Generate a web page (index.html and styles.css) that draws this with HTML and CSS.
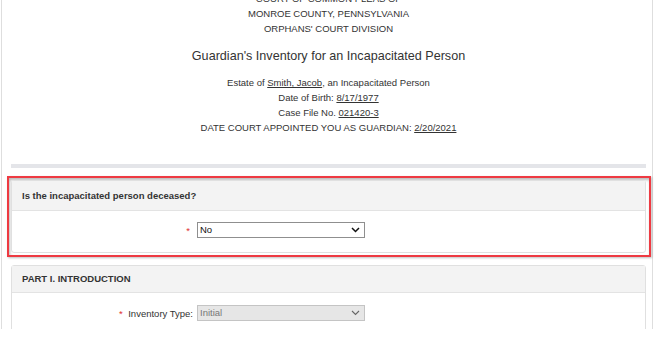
FILE: index.html
```html
<!DOCTYPE html>
<html>
<head>
<meta charset="utf-8">
<link rel="stylesheet" href="styles.css">
</head>
<body>
<div class="page">
  <div class="court">
    <div>COURT OF COMMON PLEAS OF</div>
    <div>MONROE COUNTY, PENNSYLVANIA</div>
    <div>ORPHANS' COURT DIVISION</div>
  </div>
  <h1 class="title">Guardian's Inventory for an Incapacitated Person</h1>
  <div class="estate">
    <div>Estate of <u>Smith, Jacob</u>, an Incapacitated Person</div>
    <div>Date of Birth: <u>8/17/1977</u></div>
    <div>Case File No. <u>021420-3</u></div>
    <div>DATE COURT APPOINTED YOU AS GUARDIAN: <u>2/20/2021</u></div>
  </div>
  <div class="divider"></div>

  <div class="highlight">
    <div class="panel">
      <div class="panel-head">Is the incapacitated person deceased?</div>
      <div class="panel-body">
        <div class="form-row">
          <label class="label"><span class="req">*</span></label>
          <div class="select-wrap">
            <select class="select"><option>No</option></select>
            <svg class="chev" width="9" height="6" viewBox="0 0 9 6"><path d="M1 1 L4.5 4.5 L8 1" fill="none" stroke="#111" stroke-width="1.5"/></svg>
          </div>
        </div>
      </div>
    </div>
  </div>

  <div class="panel second">
    <div class="panel-head">PART I. INTRODUCTION</div>
    <div class="panel-body">
      <div class="form-row">
        <label class="label"><span class="req">*</span> Inventory Type:</label>
        <div class="select-wrap">
          <select class="select disabled" disabled><option>Initial</option></select>
          <svg class="chev" width="9" height="6" viewBox="0 0 9 6"><path d="M1 1 L4.5 4.5 L8 1" fill="none" stroke="#666" stroke-width="1.1"/></svg>
        </div>
      </div>
    </div>
  </div>
</div>
</body>
</html>
```

FILE: styles.css
```css
html, body {
  margin: 0;
  padding: 0;
  background: #fff;
  overflow: hidden;
}
body {
  font-family: "Liberation Sans", Arial, sans-serif;
  color: #333;
  font-size: 9.5px;
}
.page {
  margin: 0 3px 0 1px;
  border-left: 1px solid #dedede;
  border-right: 1px solid #dedede;
  height: 338px;
  padding: 0 6px 0 9px;
  box-sizing: border-box;
}
.court {
  margin-top: -9px;
  text-align: center;
  line-height: 15px;
}
.title {
  margin: 11px 0 0;
  text-align: center;
  font-size: 12.6px;
  font-weight: normal;
  line-height: 18px;
  color: #333;
}
.estate {
  margin-top: 10px;
  text-align: center;
  line-height: 15px;
}
.estate u {
  text-decoration: underline;
  text-underline-offset: 1px;
}
.divider {
  margin-top: 29px;
  height: 4px;
  background: #e4e5e9;
}
.highlight {
  margin: 8px -5px 0 -4px;
  border: 2px solid #ee3a42;
  padding: 2px 3px 2px 2px;
  box-shadow: inset 1px 2px 3px rgba(0,0,0,0.28), 1px 1px 2px rgba(0,0,0,0.25);
}
.panel {
  border: 1px solid #e0e0e0;
  border-radius: 3px;
  background: #fff;
}
.second {
  margin-top: 8px;
}
.panel-head {
  background: #f3f3f3;
  border-bottom: 1px solid #e3e3e3;
  height: 29px;
  line-height: 29px;
  padding: 0 10px;
  font-weight: bold;
  color: #333;
}
.second .panel-head {
  height: 26px;
  line-height: 26px;
}
.panel-body {
  padding: 11px 0 14px;
}
.second .panel-body {
  padding: 12px 0 13px;
}
.form-row {
  display: grid;
  grid-template-columns: 181px 168px;
  column-gap: 4px;
  align-items: center;
}
.label {
  text-align: right;
  color: #333;
}
.req {
  color: #e03030;
  margin-right: 3px;
}
.select-wrap {
  position: relative;
  height: 16px;
}
.select {
  -webkit-appearance: none;
  appearance: none;
  width: 168px;
  height: 16px;
  margin: 0;
  padding: 0 0 0 2px;
  border: 1px solid #8f8f8f;
  border-radius: 0;
  background: #fff;
  font-family: "Liberation Sans", Arial, sans-serif;
  font-size: 9.5px;
  color: #111;
  box-sizing: border-box;
  line-height: 14px;
}
.select.disabled {
  background: #e6e6e6;
  border-color: #c4c4c4;
  color: #777;
  opacity: 1;
}
.chev {
  position: absolute;
  right: 5px;
  top: 5px;
  pointer-events: none;
}
```
